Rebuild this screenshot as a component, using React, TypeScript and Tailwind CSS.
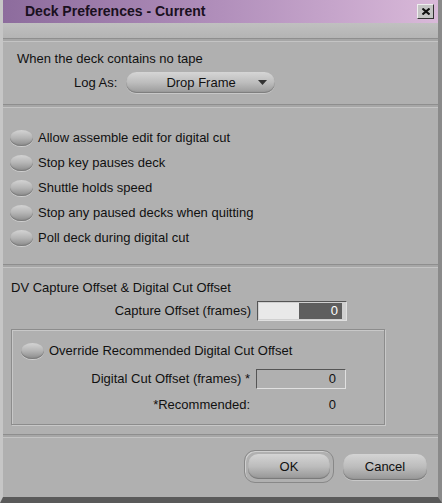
import React from "react";

const radios = [
  "Allow assemble edit for digital cut",
  "Stop key pauses deck",
  "Shuttle holds speed",
  "Stop any paused decks when quitting",
  "Poll deck during digital cut",
];

function Radio() {
  return (
    <span className="inline-block shrink-0 w-[23px] h-[16px] rounded-[50%] bg-gradient-to-b from-[#d4d4d4] via-[#b4b4b4] to-[#8a8a8a] shadow-[0_1px_0_#cfcfcf,inset_0_-1px_1px_#7a7a7a]" />
  );
}

function Separator() {
  return (
    <div className="h-[4px] shrink-0 border-t border-[#8e8e8e] bg-[#a6a6a6] border-b border-b-[#c4c4c4]" />
  );
}

export default function App() {
  return (
    <div
      className="w-[442px] h-[503px] bg-[#b0b0b0] text-[13px] text-[#111] flex flex-col border-l-[3px] border-l-[#c6c6c6] border-r-[4px] border-r-[#8a8a8a] border-b-[6px] border-b-[#5a5a5a] overflow-hidden"
      style={{ fontFamily: '"Liberation Sans", Arial, sans-serif' }}
    >
      {/* title bar */}
      <div className="h-[23px] shrink-0 flex items-center bg-gradient-to-r from-[#8d6c9d] via-[#b18fbb] to-[#d9b9d9] pl-[22px] pr-[4px]">
        <span className="font-bold text-[14px] text-[#1a1020] flex-1">Deck Preferences - Current</span>
        <span className="w-[17px] h-[15px] flex items-center justify-center bg-[#c4c4c4] border border-t-[#eee] border-l-[#eee] border-r-[#333] border-b-[#333]">
          <svg width="8" height="7" viewBox="0 0 8 7">
            <path d="M0.5 0.5 L7.5 6.5 M7.5 0.5 L0.5 6.5" stroke="#111" strokeWidth="2" />
          </svg>
        </span>
      </div>

      {/* toolbar strip */}
      <div className="h-[15px] shrink-0 bg-gradient-to-b from-[#c0c0c0] to-[#b4b4b4]" />
      <Separator />

      {/* no tape section */}
      <div className="h-[62px] shrink-0 pl-[14px] pt-[9px]">
        <div className="leading-[15px]">When the deck contains no tape</div>
        <div className="flex items-center mt-[6px] pl-[57px] gap-[9px]">
          <span>Log As:</span>
          <span className="w-[149px] h-[21px] rounded-full bg-gradient-to-b from-[#d6d6d6] via-[#bdbdbd] to-[#999] shadow-[inset_0_-1px_1px_#7d7d7d,0_1px_0_#c8c8c8] flex items-center pl-[40px] pr-[8px]">
            <span className="flex-1">Drop Frame</span>
            <svg width="9" height="5" viewBox="0 0 9 5">
              <polygon points="0,0 9,0 4.5,5" fill="#333" />
            </svg>
          </span>
        </div>
      </div>
      <Separator />

      {/* radio list */}
      <div className="h-[156px] shrink-0 pl-[7px] pt-[22px] flex flex-col gap-[9px]">
        {radios.map((r) => (
          <div key={r} className="flex items-center gap-[5px] h-[16px]">
            <Radio />
            <span>{r}</span>
          </div>
        ))}
      </div>
      <Separator />

      {/* DV offsets */}
      <div className="h-[166px] shrink-0 pl-[8px] pt-[12px] pr-[53px]">
        <div className="leading-[15px]">DV Capture Offset &amp; Digital Cut Offset</div>
        <div className="flex items-center justify-end mt-[6px] pr-[38px] gap-[6px]">
          <span>Capture Offset (frames)</span>
          <span className="w-[90px] h-[20px] flex border border-t-[#555] border-l-[#555] border-r-[#e0e0e0] border-b-[#e0e0e0] bg-[#d0d0d0] p-[1px]">
            <span className="w-[40px] bg-[#e9e9e9]" />
            <span className="flex-1 bg-[#5e5e5e] text-white text-right pr-[4px] leading-[16px] mr-[3px]">0</span>
          </span>
        </div>

        <div className="mt-[8px] h-[96px] border border-[#8c8c8c] shadow-[inset_1px_1px_0_#c8c8c8,1px_1px_0_#c8c8c8] pl-[9px] pt-[13px]">
          <div className="flex items-center gap-[5px] h-[16px]">
            <Radio />
            <span>Override Recommended Digital Cut Offset</span>
          </div>
          <div className="flex items-center justify-end mt-[10px] pr-[38px] gap-[6px]">
            <span>Digital Cut Offset (frames) *</span>
            <span className="w-[90px] h-[20px] border border-t-[#555] border-l-[#555] border-r-[#e0e0e0] border-b-[#e0e0e0] bg-[#b0b0b0] text-right pr-[9px] leading-[18px]">
              0
            </span>
          </div>
          <div className="flex items-center justify-end mt-[6px] pr-[38px] gap-[6px]">
            <span>*Recommended:</span>
            <span className="w-[90px] text-right pr-[10px]">0</span>
          </div>
        </div>
      </div>
      <Separator />

      {/* buttons */}
      <div className="flex-1 flex items-center justify-end pr-[11px] gap-[9px] pb-[2px]">
        <span className="rounded-[11px] border border-[#888] shadow-[inset_1px_1px_0_#cfcfcf] p-[3px]">
          <span className="w-[82px] h-[25px] rounded-[10px] bg-gradient-to-b from-[#d4d4d4] via-[#bcbcbc] to-[#959595] shadow-[inset_0_-1px_1px_#777] flex items-center justify-center">
            OK
          </span>
        </span>
        <span className="w-[84px] h-[26px] rounded-[10px] bg-gradient-to-b from-[#d4d4d4] via-[#bcbcbc] to-[#959595] shadow-[inset_0_-1px_1px_#777,0_1px_0_#c8c8c8] flex items-center justify-center">
          Cancel
        </span>
      </div>
    </div>
  );
}
